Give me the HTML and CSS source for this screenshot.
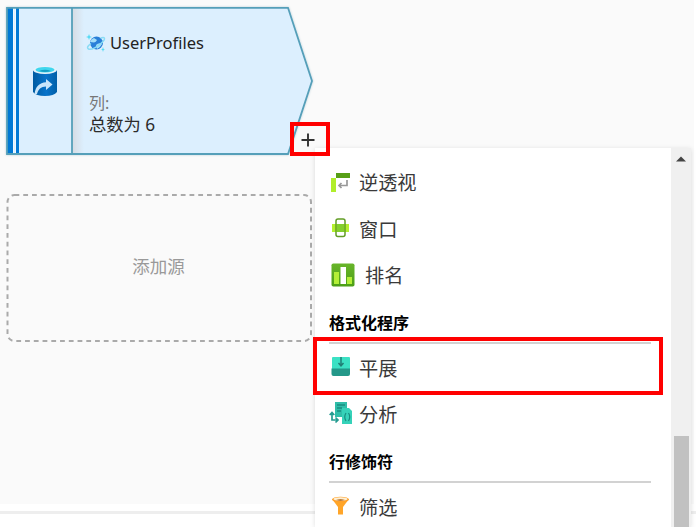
FILE: index.html
```html
<!DOCTYPE html>
<html lang="zh-CN">
<head>
<meta charset="utf-8">
<title>UserProfiles</title>
<link rel="stylesheet" href="styles.css">
</head>
<body>
<main class="canvas">
  <section class="node">
    <svg class="node-shape" width="308" height="150" viewBox="0 0 308 150">
      <defs><linearGradient id="fold"><stop stop-color="#d5dbe2"/><stop offset="1" stop-color="#dceffe"/></linearGradient></defs>
      <path d="M1 1.8H282L306 75L282 148H1Z" fill="#dceffe"/>
      <path d="M66 2H78V147H66Z" fill="url(#fold)"/>
      <path d="M1 2H7V147H1ZM10 2H13V147H10Z" fill="#0078d4"/>
      <path d="M7 2H8V147H7ZM9 2H10V147H9Z" fill="#fff" opacity=".55"/>
      <path d="M1 1.8H282L306 75L282 148H1ZM66 2V148" fill="none" stroke="#559fb9" stroke-width="1.8"/>
    </svg>
    <div class="node-side">
      <svg width="24" height="30" viewBox="0 0 24 30">
        <defs><linearGradient id="db"><stop stop-color="#005ba1"/><stop offset=".55" stop-color="#0873ca"/><stop offset="1" stop-color="#005fa8"/></linearGradient></defs>
        <path d="M0 4V26Q3 30 12 30Q21 30 24 26V4Z" fill="url(#db)"/>
        <ellipse cx="12" cy="4" rx="12" ry="4" fill="#e4f2fa"/>
        <ellipse cx="12" cy="3.8" rx="9.5" ry="2.8" fill="#3fd6ee"/>
        <path d="M6 5Q12 2.5 18 5Q12 7 6 5Z" fill="#159fc5"/>
        <path d="M1.500 28C2.500 20.500 6.500 16.500 13 16.200V13L19.500 18.500L13 24V20.500C8 20.500 5 23.500 4 28Z" fill="#c9e5fa"/>
      </svg>
    </div>
    <div class="node-body">
      <h1 class="node-title">
        <svg width="20" height="20" viewBox="0 0 20 20">
          <circle cx="10.500" cy="10" r="6.500" fill="#2a7fd8"/>
          <path d="M4 9Q5 6 8 5L11 7Q10 9 8 9.500ZM10 12Q13 9 16 11Q14 15 11 16Z" fill="#a5def8"/>
          <path d="M14.500 5C19 3.500 20 5.500 16 9.500S5 17.500 2.500 16S3 12 5 10.500" fill="none" stroke="#8adcf5" stroke-width="1.500"/>
          <path d="M3 1L3.800 3.200L6 4L3.800 4.800L3 7L2.200 4.800L0 4L2.200 3.200ZM17 14L17.600 16L19 16.500L17.600 17L17 19L16.400 17L15 16.500L16.400 16Z" fill="#52daf4"/>
        </svg>
        <span>UserProfiles</span>
      </h1>
      <p class="node-label">列:</p>
      <p class="node-value">总数为 6</p>
    </div>
  </section>
  <section class="add-source">
    <svg class="dash" width="307" height="150" viewBox="0 0 307 150"><rect x="1.500" y="2" width="303.500" height="146" rx="7" fill="none" stroke="#aaa" stroke-width="2" stroke-dasharray="4.800 3.950"/></svg>
    <span>添加源</span>
  </section>
</main>
<div class="splitter"></div>

<aside class="menu">
  <div class="menu-list">
    <div class="item"><span class="icon"><svg width="20" height="20" viewBox="0 0 20 20"><path d="M0 6H5V20H0Z" fill="#b1ee2b"/><path d="M5 1H19V6H5Z" fill="#579f17"/><path d="M16 8V13.500H8M10.500 11L8 13.500L10.500 16" fill="none" stroke="#999" stroke-width="1.700"/></svg></span>逆透视</div>
    <div class="item"><span class="icon"><svg width="20" height="20" viewBox="0 0 20 20"><path d="M1 6H18V14H1Z" fill="#b4f02e"/><path d="M6 6H13V14H6Z" fill="#83cf2c"/><rect x="5" y="1" width="9" height="17.500" rx="2" fill="none" stroke="#629d25" stroke-width="1.500"/></svg></span>窗口</div>
    <div class="item wide"><span class="icon"><svg width="24" height="24" viewBox="0 0 24 24"><defs><linearGradient id="rank" x2="0" y2="1"><stop stop-color="#68b52a"/><stop offset="1" stop-color="#4c9f16"/></linearGradient></defs><rect x=".5" y=".5" width="23" height="23" rx="1.800" fill="url(#rank)"/><path d="M3 9H8V21H3ZM16 14H21V21H16Z" fill="#b4ef37"/><path d="M9.500 4H15V21H9.500Z" fill="#fff"/></svg></span>排名</div>
    <h2 class="heading">格式化程序</h2>
    <div class="item"><span class="icon"><svg width="20" height="20" viewBox="0 0 20 20"><path d="M1 1Q1 0 2 0H18Q19 0 19 1V12H1Z" fill="#3be1c4"/><path d="M.5 11.500H19V17Q19 19 17 19H2.500Q.5 19 .5 17Z" fill="#249889"/><path d="M10 0V8M7.500 6L10 8.800L12.500 6" fill="none" stroke="#217f75" stroke-width="1.500"/></svg></span>平展</div>
    <div class="item"><span class="icon parse"><svg width="24" height="23" viewBox="0 0 24 23"><path d="M6 0H18V15H6Z" fill="#2fbda9"/><path d="M8 3H16M8 6H13M8 9H12" stroke="#188d80" stroke-width="1.300"/><path d="M13 6H20L23 9V22H13Z" fill="#36d2b9"/><path d="M17 11Q14.500 15 17 19M19.500 11Q22 15 19.500 19" fill="none" stroke="#188d80" stroke-width="1.200"/><path d="M3 10.500V18H8M.7 13L3 10.500L5.300 13M6.500 15.500L9 18L6.500 20.500" fill="none" stroke="#259c91" stroke-width="1.700"/></svg></span>分析</div>
    <h2 class="heading">行修饰符</h2>
    <div class="item"><span class="icon"><svg width="20" height="20" viewBox="0 0 20 20"><path d="M1 3L7 11V18.500H12V11L18 3Z" fill="#ffa529"/><ellipse cx="9.500" cy="3.500" rx="8.500" ry="2.800" fill="#ffa12b"/><ellipse cx="9.500" cy="3" rx="7" ry="1.700" fill="#fff0d3"/><path d="M5 4Q9.500 2.600 14 4Q9.500 5.600 5 4Z" fill="#a55b12"/></svg></span>筛选</div>
  </div>
  <div class="scrollbar">
    <svg width="10" height="6" viewBox="0 0 10 6"><path d="M0 5.500L5 .5L10 5.500Z" fill="#444"/></svg>
    <div class="thumb"></div>
  </div>
</aside>
<div class="mark mark-plus"><svg width="14" height="14" viewBox="0 0 14 14"><path d="M7 .5V13.500M.5 7H13.500" stroke="#333" stroke-width="1.900"/></svg></div>
<div class="mark mark-flatten"></div>
</body>
</html>
```
FILE: styles.css
```css
* { box-sizing: border-box; }
body {
  margin: 0;
  width: 696px;
  height: 527px;
  position: relative;
  overflow: hidden;
  background: #fff;
  font-family: "Noto Sans", "Noto Sans CJK SC", sans-serif;
}
h1, h2, p { margin: 0; }
svg { display: block; flex: none; }
.canvas {
  width: 694px;
  height: 504px;
  padding: 6px 0 0 6px;
  background: #fafafa;
}
.splitter { height: 10px; border-bottom: 3px solid #eee; }
.node { position: relative; display: flex; width: 308px; height: 150px; }
.node-shape { position: absolute; left: 0; top: 0; filter: drop-shadow(0 0 1px #b9ced7); }
.node-side { position: relative; width: 66px; padding: 60px 0 0 27px; }
.node-body { position: relative; padding: 27px 0 0 14px; }
.node-title {
  display: flex;
  align-items: center;
  gap: 4px;
  height: 20px;
  font: 400 16.5px/20px "Noto Sans", sans-serif;
  color: #222;
}
.node-label { margin: 39px 0 0 3px; font-size: 16px; line-height: 22px; color: #777; }
.node-value { margin-left: 3px; font-size: 17.3px; line-height: 22px; color: #2b2b2b; }
.add-source {
  position: relative;
  display: flex;
  align-items: center;
  justify-content: center;
  width: 307px;
  height: 150px;
  margin-top: 37px;
  padding: 0 2px 5px 0;
  font-size: 17.5px;
  color: #999;
}
.dash { position: absolute; left: 0; top: 0; }
.menu {
  position: absolute;
  left: 315px;
  top: 148px;
  display: flex;
  width: 376px;
  height: 379px;
  background: #fff;
  box-shadow: 0 1px 5px rgba(0, 0, 0, .13);
}
.menu-list { width: 356px; padding-top: 12px; overflow: hidden; }
.item {
  display: flex;
  align-items: center;
  height: 46.5px;
  padding-left: 16px;
  font-size: 19.2px;
  line-height: 28px;
  color: #3a3a3a;
}
.icon { width: 28px; margin-top: -3px; }
.wide .icon { width: 34px; }
.icon.parse { margin-left: -2px; width: 30px; }
.heading {
  width: 322px;
  height: 44px;
  margin: 0 0 2px 14px;
  padding-top: 11.5px;
  border-bottom: 2px solid #d2d2d2;
  font-size: 16px;
  font-weight: 700;
  line-height: 24px;
  color: #000;
}
.scrollbar { width: 20px; padding: 8px 2px 0 3px; background: #f0f0f0; }
.scrollbar svg { margin-left: 2px; }
.thumb { height: 91px; margin-top: 274px; background: #c1c1c1; }
.mark { position: absolute; border: 4px solid #f00; }
.mark-plus { left: 290px; top: 122px; width: 40px; height: 34px; padding: 7px 0 0 7px; }
.mark-flatten { left: 313px; top: 337px; width: 350px; height: 58px; }
```
